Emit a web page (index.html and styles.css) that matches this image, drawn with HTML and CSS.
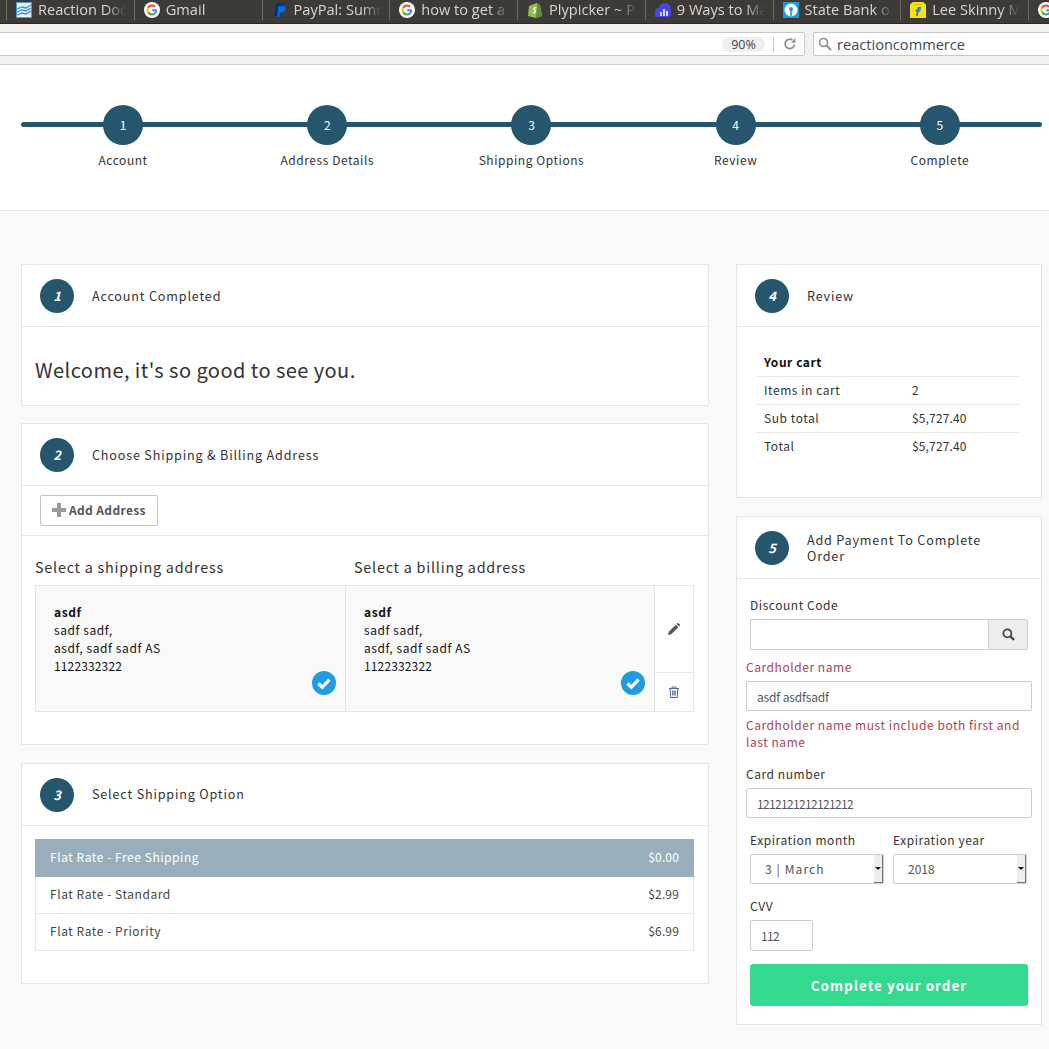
FILE: index.html
```html
<!DOCTYPE html>
<html lang="en">
<head>
<meta charset="utf-8">
<title>Checkout</title>
<link rel="stylesheet" href="styles.css">
</head>
<body>
<svg class="defs" width="0" height="0" aria-hidden="true">
  <symbol id="g" viewBox="0 0 16 16">
    <circle cx="8" cy="8" r="8" fill="#fff"/>
    <path d="M12.6 8.3H8.2" stroke="#4285f4" stroke-width="2" fill="none"/>
    <path d="M12.4 8.3a4.5 4.5 0 0 1-1.4 3" stroke="#4285f4" stroke-width="2" fill="none"/>
    <path d="M11 11.3A4.5 4.5 0 0 1 4.2 10.400" stroke="#34a853" stroke-width="2" fill="none"/>
    <path d="M4.200 10.400a4.500 4.500 0 0 1 0-4.800" stroke="#fbbc05" stroke-width="2" fill="none"/>
    <path d="M4.200 5.600A4.500 4.500 0 0 1 11.100 4.800" stroke="#ea4335" stroke-width="2" fill="none"/>
  </symbol>
  <symbol id="check" viewBox="0 0 24 24">
    <circle cx="12" cy="12" r="12" fill="#1f9be0"/>
    <path d="M6.500 12.500l3.800 3.800 7.200-7.600" stroke="#fff" stroke-width="3.200" fill="none"/>
  </symbol>
</svg>

<div class="tabs">
  <div class="tab"><svg class="fav" viewBox="0 0 16 16"><rect width="16" height="16" fill="#4a9fdc"/><rect x="1" y="1" width="14" height="14" fill="#e8f3fa"/><path d="M1 7l5-2 4 1 5-3M1 10l5-2 4 1 5-3M1 13l5-2 4 1 5-3" stroke="#3b8fd0" stroke-width="1.300" fill="none"/></svg><span class="tab-text">Reaction Doc</span></div>
  <div class="tab"><svg class="fav"><use href="#g"/></svg><span class="tab-text">Gmail</span></div>
  <div class="tab"><svg class="fav" viewBox="0 0 16 16"><path d="M4 1h5.500c2.500 0 3.500 1.500 3 3.500-.5 2.500-2 3.500-4.500 3.500H6.500l-1 6H2z" fill="#003087"/><path d="M6.500 4h4.500c2 0 3 1.300 2.500 3.200-.5 2.300-2 3.300-4 3.300H8l-.7 4.500H5z" fill="#0070e0"/></svg><span class="tab-text">PayPal: Sumr</span></div>
  <div class="tab"><svg class="fav"><use href="#g"/></svg><span class="tab-text">how to get a</span></div>
  <div class="tab"><svg class="fav" viewBox="0 0 16 16"><path d="M2 4l8-3 3 2 2 11-6 2-8-2z" fill="#95bf47"/><path d="M10 1l3 2 2 11-6 2z" fill="#5e8e3e"/><path d="M9.500 6c-2-.8-3.500.8-1.800 2 1.800 1.200.5 3.300-2 2.300" stroke="#fff" stroke-width="1.400" fill="none"/></svg><span class="tab-text">Plypicker ~ P</span></div>
  <div class="tab"><svg class="fav" viewBox="0 0 16 16"><path d="M0 15V9a3 3 0 0 1 4-3 6 6 0 0 1 11.900 1v6a2 2 0 0 1-2 2z" fill="#4845e8"/><path d="M6 14V10M9 14V7M12 14V9" stroke="#fff" stroke-width="1.500"/></svg><span class="tab-text">9 Ways to Ma</span></div>
  <div class="tab"><svg class="fav" viewBox="0 0 16 16"><rect width="16" height="16" fill="#1a9ad6"/><circle cx="8" cy="8" r="6.500" fill="#fff"/><circle cx="8" cy="7" r="2" fill="#1a9ad6"/><rect x="7.200" y="8" width="1.600" height="6.500" fill="#1a9ad6"/></svg><span class="tab-text">State Bank o</span></div>
  <div class="tab"><svg class="fav" viewBox="0 0 16 16"><path d="M3 0h10l3 2.500V16H0V2.500z" fill="#f6e60c"/><path d="M4 2.500h8" stroke="#d8c400"/><path d="M11 6H8.500L8 8.500h2.500M8 8.500L6.800 14M7.500 8.500H5.500" stroke="#2874f0" stroke-width="1.800" fill="none"/></svg><span class="tab-text">Lee Skinny M</span></div>
  <div class="tab"><svg class="fav"><use href="#g"/></svg></div>
</div>

<div class="toolbar">
  <div class="urlbar">
    <span class="zoom-pill">90%</span>
    <span class="url-sep"></span>
    <svg class="reload" viewBox="0 0 14 14"><path d="M11.500 7.500A4.700 4.700 0 1 1 9.500 3" stroke="#8d9396" stroke-width="1.800" fill="none"/><path d="M7.800 5.800H12.500V1z" fill="#8d9396"/></svg>
  </div>
  <div class="searchbar">
    <svg class="search-ic" viewBox="0 0 14 14"><circle cx="5.500" cy="5.500" r="4" stroke="#8f8f8f" stroke-width="1.600" fill="none"/><path d="M8.500 8.500l4.500 4.500" stroke="#8f8f8f" stroke-width="2"/></svg>
    <span class="search-text">reactioncommerce</span>
  </div>
</div>

<header class="steps">
  <div class="steps-line"></div>
  <div class="step"><span class="step-dot">1</span><span class="step-label">Account</span></div>
  <div class="step"><span class="step-dot">2</span><span class="step-label">Address Details</span></div>
  <div class="step"><span class="step-dot">3</span><span class="step-label">Shipping Options</span></div>
  <div class="step"><span class="step-dot">4</span><span class="step-label">Review</span></div>
  <div class="step"><span class="step-dot">5</span><span class="step-label">Complete</span></div>
</header>

<main class="checkout">
  <div class="col">
    <section class="panel">
      <div class="panel-head"><span class="badge">1</span><h2>Account Completed</h2></div>
      <div class="welcome">Welcome, it's so good to see you.</div>
    </section>

    <section class="panel panel-address">
      <div class="panel-head"><span class="badge">2</span><h2>Choose Shipping &amp; Billing Address</h2></div>
      <div class="add-row">
        <button class="add-btn"><svg class="plus" viewBox="0 0 14 14"><path d="M5 0h4v5h5v4H9v5H5V9H0V5h5z" fill="#9a9a9a"/></svg>Add Address</button>
      </div>
      <div class="address-body">
        <div class="address-titles"><h3>Select a shipping address</h3><h3>Select a billing address</h3></div>
        <div class="address-tile">
          <div class="address address-ship">
            <strong>asdf</strong><br>sadf sadf,<br>asdf, sadf sadf AS<br><span class="phone">1122332322</span>
            <svg class="tick"><use href="#check"/></svg>
          </div>
          <div class="address address-bill">
            <strong>asdf</strong><br>sadf sadf,<br>asdf, sadf sadf AS<br><span class="phone">1122332322</span>
            <svg class="tick"><use href="#check"/></svg>
          </div>
          <div class="address-actions">
            <div class="act act-edit"><svg class="ic-edit" viewBox="0 0 12 12"><path d="M0 12l.8-3.300L7.800 1.700l2.500 2.500-7 7zM8.600 1L9.400.2c.4-.3.800-.3 1.100 0l1.300 1.300c.3.300.3.700 0 1.100l-.8.800z" fill="#555"/></svg></div>
            <div class="act act-del"><svg class="ic-del" viewBox="0 0 12 12"><path d="M1 2.500h10M4 2.500V1h4v1.500M2.200 2.500l.5 9h6.600l.5-9M4.700 4.500v5M6 4.500v5M7.300 4.500v5" stroke="#4a6a94" stroke-width="1" fill="none"/></svg></div>
          </div>
        </div>
      </div>
    </section>

    <section class="panel panel-shipping">
      <div class="panel-head"><span class="badge">3</span><h2>Select Shipping Option</h2></div>
      <div class="ship-body">
        <div class="ship-list">
          <div class="ship-row active"><span>Flat Rate - Free Shipping</span><span class="price">$0.00</span></div>
          <div class="ship-row"><span>Flat Rate - Standard</span><span class="price">$2.99</span></div>
          <div class="ship-row"><span>Flat Rate - Priority</span><span class="price">$6.99</span></div>
        </div>
      </div>
    </section>
  </div>

  <div class="col">
    <section class="panel panel-review">
      <div class="panel-head"><span class="badge">4</span><h2>Review</h2></div>
      <div class="review-body">
        <div class="rv-row rv-title"><strong>Your cart</strong></div>
        <div class="rv-row"><span>Items in cart</span><span class="price">2</span></div>
        <div class="rv-row"><span>Sub total</span><span class="price">$5,727.40</span></div>
        <div class="rv-row"><span>Total</span><span class="price">$5,727.40</span></div>
      </div>
    </section>

    <section class="panel panel-pay">
      <div class="panel-head"><span class="badge">5</span><h2>Add Payment To Complete Order</h2></div>
      <div class="pay-body">
        <div class="field inset">
          <label>Discount Code</label>
          <div class="discount">
            <input class="discount-input" type="text">
            <span class="discount-btn"><svg class="ic-search" viewBox="0 0 14 14"><circle cx="5.800" cy="5.800" r="4.300" stroke="#444" stroke-width="2" fill="none"/><path d="M9 9l4 4" stroke="#444" stroke-width="2.400"/></svg></span>
          </div>
        </div>
        <div class="field has-error">
          <label>Cardholder name</label>
          <input class="ctl" type="text" value="asdf asdfsadf">
          <p class="error">Cardholder name must include both first and last name</p>
        </div>
        <div class="field field-card">
          <label>Card number</label>
          <input class="ctl digits" type="text" value="1212121212121212">
        </div>
        <div class="exp-row inset">
          <div class="field">
            <label>Expiration month</label>
            <div class="sel"><select class="sel-month"><option>3 | March</option></select><span class="sel-arrow"></span></div>
          </div>
          <div class="field">
            <label>Expiration year</label>
            <div class="sel"><select class="sel-year"><option>2018</option></select><span class="sel-arrow"></span></div>
          </div>
        </div>
        <div class="field inset field-cvv">
          <label>CVV</label>
          <input class="ctl digits cvv" type="text" value="112">
        </div>
        <button class="complete">Complete your order</button>
      </div>
    </section>
  </div>
</main>
</body>
</html>
```
FILE: styles.css
```css
* { box-sizing: border-box; }
html, body { margin: 0; padding: 0; }
body {
  width: 1049px;
  height: 1049px;
  overflow: hidden;
  background: #f9f9f9;
  color: #333;
  font-family: "Noto Sans CJK SC", "Lato", sans-serif;
  font-size: 12px;
  letter-spacing: 0.55px;
  line-height: 18px;
}
.defs { position: absolute; }
h2, h3, p { margin: 0; font-weight: 400; }

/* browser chrome */
.tabs {
  height: 24px;
  padding: 0 0 1px 6px;
  display: flex;
  background: #3c3b37;
  border-bottom: 1px solid #2b2a27;
  overflow: hidden;
  font-family: "Open Sans", sans-serif;
  font-size: 14.600px;
  letter-spacing: 0;
  color: #d9d6cf;
}
.tab {
  flex: 0 0 127.75px;
  height: 20px;
  padding-left: 9px;
  display: flex;
  align-items: center;
  gap: 6px;
  border-left: 1px solid #6d6c68;
  white-space: nowrap;
  overflow: hidden;
}
.fav { flex: none; width: 16px; height: 16px; }
.tab-text {
  line-height: 20px;
  margin-top: -2px;
  -webkit-mask-image: linear-gradient(to right, #000 68px, transparent 88px);
  mask-image: linear-gradient(to right, #000 68px, transparent 88px);
}
.toolbar {
  height: 41px;
  padding: 8px 0 0;
  display: flex;
  gap: 8px;
  background: #f2f1f0;
  border-bottom: 1px solid #d2d0cc;
  font-family: "Open Sans", sans-serif;
  letter-spacing: 0;
}
.urlbar {
  flex: 0 0 805px;
  height: 24px;
  display: flex;
  align-items: center;
  background: #fff;
  border: solid #c9c7c3;
  border-width: 1px 1px 1px 0;
  border-radius: 0 2px 2px 0;
  padding-left: 722px;
}
.zoom-pill {
  width: 43px;
  height: 15px;
  border-radius: 8px;
  background: #eef0f0;
  color: #444;
  font-size: 12.500px;
  line-height: 16px;
  text-align: center;
}
.url-sep { width: 1px; height: 15px; margin: 0 9px 0 8px; background: #c9c7c3; }
.reload { width: 14px; height: 14px; }
.searchbar {
  flex: 1;
  height: 24px;
  padding-left: 4px;
  display: flex;
  align-items: center;
  gap: 5px;
  background: #fff;
  border: solid #c9c7c3;
  border-width: 1px 0 1px 1px;
  border-radius: 2px 0 0 2px;
  font-size: 14.600px;
  color: #3c4a52;
}
.search-ic { width: 14px; height: 14px; }

/* step bar */
.steps {
  position: relative;
  height: 146px;
  padding: 40px 0 0 21px;
  display: grid;
  grid-template-columns: repeat(5, 204.2px);
  background: #fff;
  border-bottom: 1px solid #e5e5e5;
}
.steps-line {
  position: absolute;
  left: 21px;
  top: 57px;
  width: 1021px;
  height: 5px;
  border-radius: 3px;
  background: #25566e;
}
.step {
  position: relative;
  display: flex;
  flex-direction: column;
  align-items: center;
}
.step-dot {
  width: 40px;
  height: 40px;
  border-radius: 50%;
  background: #25566e;
  color: #fff;
  font-size: 12px;
  line-height: 40px;
  text-align: center;
  letter-spacing: 0;
}
.step-label { margin-top: 6px; }

/* layout */
.checkout {
  padding: 53px 7px 24px 21px;
  display: grid;
  grid-template-columns: 688px 306px;
  column-gap: 27px;
}
.col { display: flex; flex-direction: column; gap: 18px; }
.panel { background: #fff; border: 1px solid #e5e5e5; }
.panel-address { margin-top: -1px; }
.panel-head {
  min-height: 62px;
  padding: 0 18px;
  display: flex;
  align-items: center;
  gap: 18px;
  border-bottom: 1px solid #e5e5e5;
}
.badge {
  flex: none;
  width: 34px;
  height: 34px;
  border-radius: 50%;
  background: #25566e;
  color: #fff;
  font-size: 13px;
  font-style: italic;
  font-weight: 700;
  line-height: 34px;
  text-align: center;
  letter-spacing: 0;
}
h2 { font-size: 12.600px; line-height: 16px; letter-spacing: 0.82px; color: #333; }
.panel-shipping h2 { padding-bottom: 2px; }
.panel-pay h2 { max-width: 200px; }

.welcome {
  height: 78px;
  padding: 0 13px;
  font-size: 20px;
  line-height: 85px;
  letter-spacing: 0.45px;
}

/* address */
.add-row { height: 50px; padding: 9px 18px 0; border-bottom: 1px solid #e5e5e5; }
.add-btn {
  height: 31px;
  width: 118px;
  padding: 0 0 1px 11px;
  display: flex;
  align-items: center;
  gap: 3px;
  background: #fff;
  border: 1px solid #b9c5cf;
  border-radius: 2px;
  font: inherit;
  font-weight: 600;
  letter-spacing: 0.35px;
  color: #555;
}
.plus { width: 14px; height: 14px; }
.address-body { height: 208px; padding: 20px 14px 0 13px; }
.address-titles { display: flex; height: 29px; }
.address-titles h3 { flex: 0 0 319px; font-size: 14.400px; line-height: 21px; letter-spacing: 0.76px; }
.address-tile {
  height: 127px;
  display: flex;
  border: 1px solid #e5e5e5;
  color: #111;
  line-height: 18px;
  letter-spacing: 0.58px;
}
.address {
  position: relative;
  padding: 17px 18px;
  background: #f9f9f9;
}
.address-ship { flex: 0 0 310px; border-right: 1px solid #e5e5e5; }
.address-bill { flex: 0 0 308px; }
.phone { letter-spacing: 0.14px; }
.tick { position: absolute; right: 9px; bottom: 16px; width: 24px; height: 24px; }
.address-actions { flex: 1; display: flex; flex-direction: column; border-left: 1px solid #e5e5e5; }
.act { display: flex; align-items: center; justify-content: center; }
.act-edit { flex: 0 0 87px; padding: 0 1px 1px 0; border-bottom: 1px solid #e5e5e5; }
.act-del { flex: 1; }
.ic-edit { width: 12px; height: 12px; }
.ic-del { width: 12px; height: 12px; }

/* shipping */
.ship-body { height: 157px; padding: 13px 14px 0 13px; }
.ship-list { border: solid #e5e5e5; border-width: 0 1px; }
.ship-row {
  height: 37px;
  padding: 0 14px 2px;
  display: flex;
  align-items: center;
  justify-content: space-between;
  border-bottom: 1px solid #e5e5e5;
  letter-spacing: 0.55px;
  color: #444;
}
.ship-row.active { height: 38px; margin: 0 -1px; padding: 0 15px 2px; background: #98afbb; border-bottom: 0; color: #fff; }
.price { letter-spacing: 0.15px; }

/* review */
.review-body { height: 170px; padding: 21px 22px 0 20px; }
.rv-row {
  height: 28px;
  padding: 0 0 2px 7px;
  display: flex;
  align-items: center;
  border-top: 1px solid #e5e5e5;
}
.rv-row span:first-child { flex: 0 0 148px; }
.rv-title { padding-bottom: 0; border-top: 0; color: #111; }

/* payment */
.pay-body { padding: 17px 9px 0 9px; height: 445px; }
label { display: block; color: #333; line-height: 18px; }
.inset { margin: 0 4px 0 4px; }
.field label { margin-bottom: 5px; }
.discount { display: flex; height: 31px; }
.discount-input {
  flex: 1;
  min-width: 0;
  border: 1px solid #ccc;
  border-right: 0;
  border-radius: 2px 0 0 2px;
}
.discount-btn {
  flex: 0 0 40px;
  display: flex;
  align-items: center;
  justify-content: center;
  background: #eee;
  border: 1px solid #ccc;
  border-radius: 0 2px 2px 0;
}
.ic-search { width: 13px; height: 13px; }
.has-error { margin-top: 8px; }
.has-error label, .error { color: #a94455; }
.error { margin-top: 5px; line-height: 17px; }
.ctl {
  display: block;
  width: 100%;
  height: 30px;
  padding: 0 10px;
  border: 1px solid #ccc;
  border-radius: 2px;
  background: #fff;
  font: inherit;
  letter-spacing: -0.15px;
  color: #555;
}
.digits { letter-spacing: -0.66px; }
.field-card { margin-top: 15px; }
.exp-row { margin-top: 13px; display: grid; grid-template-columns: 134px 134px; column-gap: 9px; }
.sel { position: relative; height: 30px; }
select {
  display: block;
  width: 100%;
  height: 30px;
  padding: 0 14px;
  appearance: none;
  -webkit-appearance: none;
  background: #fff;
  border: 1px solid #ccc;
  border-radius: 2px;
  font: inherit;
  color: #555;
}
.sel-month { letter-spacing: 1.1px; }
.sel-year { letter-spacing: 0; }
.sel-arrow {
  position: absolute;
  right: 1px;
  top: 1px;
  width: 9px;
  height: 28px;
  background: #eeedeb;
  border-right: 1px solid #777;
  border-bottom: 1px solid #777;
}
.sel-arrow::after {
  content: "";
  position: absolute;
  left: 1px;
  top: 12px;
  border: solid transparent;
  border-width: 3px 3px 0;
  border-top-color: #111;
}
.field-cvv { margin-top: 13px; }
.cvv { width: 63px; height: 31px; }
.complete {
  display: block;
  width: 278px;
  height: 42px;
  margin: 13px 4px 0;
  border: 0;
  border-radius: 3px;
  background: #34d990;
  color: #fff;
  font: inherit;
  font-size: 13.500px;
  font-weight: 700;
  letter-spacing: 1px;
}
```
